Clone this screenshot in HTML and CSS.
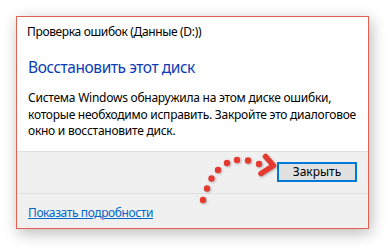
FILE: index.html
```html
<!DOCTYPE html>
<html lang="ru">
<head>
<meta charset="utf-8">
<link rel="stylesheet" href="styles.css">
</head>
<body>
<div class="dialog">
  <div class="main">
    <div class="title">Проверка ошибок (Данные (D:))</div>
    <div class="heading">Восстановить этот диск</div>
    <p class="message">Система Windows обнаружила на этом диске ошибки,<br>которые необходимо исправить. Закройте это диалоговое<br>окно и восстановите диск.</p>
  </div>
  <div class="buttons">
    <button class="btn">Закрыть</button>
  </div>
  <div class="footer">
    <a class="link" href="#">Показать подробности</a>
  </div>
  <svg class="arrow" width="90" height="60" viewBox="0 0 90 60">
    <g fill="#e53a30">
      <circle cx="12" cy="50" r="3.2"/>
      <circle cx="16" cy="38.5" r="3.2"/>
      <circle cx="20.5" cy="28.5" r="3.2"/>
      <circle cx="27" cy="20" r="3.2"/>
      <circle cx="36" cy="13" r="3.2"/>
      <circle cx="46" cy="10" r="3.2"/>
      <circle cx="57" cy="10.5" r="3.2"/>
      <circle cx="68" cy="14" r="3.2"/>
    </g>
    <path d="M74.5 6.5 L82.5 15.5 L70 23.5" fill="none" stroke="#e53a30" stroke-width="5.5" stroke-linecap="round" stroke-linejoin="round"/>
  </svg>
</div>
</body>
</html>
```
FILE: styles.css
```css
html, body {
  margin: 0;
  padding: 0;
  background: #ffffff;
}
body {
  width: 390px;
  height: 252px;
  overflow: hidden;
  font-family: "Noto Sans", "Open Sans", sans-serif;
  font-size: 12px;
  color: #000;
}
.dialog {
  position: relative;
  margin: 16px 0 0 16px;
  width: 351px;
  border: 1px solid #e0614f;
  background: #f0f0f0;
  box-shadow: 2px 4px 14px rgba(0, 0, 0, 0.28);
  display: flex;
  flex-direction: column;
}
.main {
  background: #ffffff;
  height: 135px;
  border-bottom: 1px solid #dfdfdf;
  padding: 0 11px 0 10px;
  box-sizing: border-box;
}
.title {
  padding-top: 7px;
  line-height: 16px;
  height: 16px;
  letter-spacing: -0.35px;
}
.heading {
  margin-top: 16px;
  margin-left: 1px;
  font-size: 15.5px;
  line-height: 22px;
  letter-spacing: -0.45px;
  color: #0a3db5;
}
.message {
  margin: 12px 0 0 1px;
  line-height: 16.5px;
  letter-spacing: -0.25px;
  color: #000;
}
.buttons {
  height: 41px;
  border-bottom: 1px solid #dfdfdf;
  display: flex;
  justify-content: flex-end;
  align-items: center;
  padding-right: 11px;
}
.btn {
  width: 80px;
  height: 20px;
  box-sizing: border-box;
  border: 2px solid #0078d7;
  background: #e1e1e1;
  font-family: "Noto Sans", "Open Sans", sans-serif;
  font-size: 12px;
  color: #000;
  padding: 0;
  line-height: 14px;
  margin-top: -1px;
}
.footer {
  height: 34px;
  display: flex;
  align-items: center;
  padding-left: 11px;
}
.link {
  color: #0066cc;
  text-decoration: underline;
  line-height: 16px;
  letter-spacing: -0.4px;
  margin-top: 3px;
}
.arrow {
  position: absolute;
  left: 174px;
  top: 133px;
  filter: drop-shadow(1px 1px 1px rgba(0, 0, 0, 0.25));
}
```
